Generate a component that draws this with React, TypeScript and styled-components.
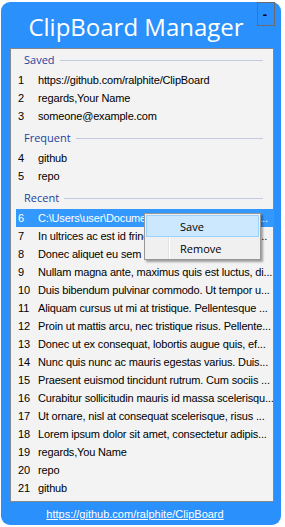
import React from "react";
import styled, { createGlobalStyle } from "styled-components";

const Global = createGlobalStyle`
  html, body { margin: 0; padding: 0; background: #ffffff; }
  * { box-sizing: border-box; }
`;

const Window = styled.div`
  position: relative;
  margin: 2px 0 0 1px;
  width: 280px;
  height: 523px;
  border-radius: 9px;
  background: #2a91fc;
  display: flex;
  flex-direction: column;
`;

const TitleBar = styled.div`
  height: 46px;
  display: grid;
  grid-template-columns: 1fr auto;
  align-items: start;
  padding-right: 6px;
`;

const Title = styled.div`
  padding: 9px 0 0 14px;
  text-align: center;
  font-family: "Open Sans", sans-serif;
  font-size: 24px;
  line-height: 32px;
  color: #ffffff;
  white-space: nowrap;
`;

const MinButton = styled.div`
  width: 18px;
  height: 24px;
  border: 1px solid #6b6b6b;
  display: flex;
  justify-content: center;
  padding: 5px 2px 0 0;
  font-family: "Liberation Sans", sans-serif;
  font-weight: bold;
  font-size: 13px;
  line-height: 13px;
  color: #000;
`;

const Panel = styled.div`
  margin: 0 7px 0 9px;
  height: 454px;
  border: 1px solid #828790;
  background: #f3f3f3;
  overflow: hidden;
`;

const Group = styled.div`
  & + & { margin-top: 2px; }
`;

const GroupHeader = styled.div`
  height: 22px;
  display: flex;
  align-items: center;
  gap: 5px;
  padding: 0 10px 0 13px;
`;

const GroupTitle = styled.span`
  font-family: "Open Sans", sans-serif;
  font-size: 11px;
  line-height: 14px;
  color: #1e3f9e;
`;

const GroupLine = styled.div`
  flex: 1;
  height: 1px;
  background: #c3cae0;
`;

const Row = styled.div<{ $selected?: boolean }>`
  height: 18px;
  margin-left: 5px;
  display: flex;
  align-items: center;
  background: ${(p) => (p.$selected ? "#3399ff" : "transparent")};
  color: ${(p) => (p.$selected ? "#ffffff" : "#000000")};
  font-family: "Liberation Sans", Arial, sans-serif;
  font-size: 11px;
  line-height: 13px;
`;

const Num = styled.span`
  width: 22px;
  padding-left: 2px;
  flex: none;
`;

const RowText = styled.span`
  flex: 1;
  min-width: 0;
  overflow: hidden;
  white-space: nowrap;
  letter-spacing: -0.16px;
`;

const Footer = styled.div`
  flex: 1;
  display: flex;
  justify-content: center;
  padding: 6px 12px 0 0;
`;

const FooterLink = styled.a`
  font-family: "Liberation Sans", Arial, sans-serif;
  font-size: 11px;
  line-height: 13px;
  color: #ffffff;
  text-decoration: underline;
`;

const Menu = styled.div`
  position: absolute;
  left: 143px;
  top: 211px;
  width: 117px;
  height: 47px;
  border: 1px solid #979797;
  padding: 1px;
  background: linear-gradient(
    to right,
    #f0f0f0 23px,
    #e2e3e3 23px,
    #e2e3e3 24px,
    #ffffff 24px,
    #ffffff 25px,
    #f0f0f0 25px
  );
  box-shadow: 2px 2px 2px rgba(0, 0, 0, 0.35);
`;

const MenuItem = styled.div<{ $active?: boolean }>`
  height: 22px;
  display: flex;
  align-items: center;
  padding-left: 33px;
  border: 1px solid ${(p) => (p.$active ? "#99d1ff" : "transparent")};
  background: ${(p) => (p.$active ? "#cce8ff" : "transparent")};
  font-family: "Open Sans", sans-serif;
  font-size: 11px;
  color: #000;
`;

type Item = { n: number; text: string };

const groups: { title: string; items: Item[] }[] = [
  {
    title: "Saved",
    items: [
      { n: 1, text: "https://github.com/ralphite/ClipBoard" },
      { n: 2, text: "regards,Your Name" },
      { n: 3, text: "someone@example.com" },
    ],
  },
  {
    title: "Frequent",
    items: [
      { n: 4, text: "github" },
      { n: 5, text: "repo" },
    ],
  },
  {
    title: "Recent",
    items: [
      { n: 6, text: "C:\\Users\\user\\Documents\\GitHub\\ClipBoard\\Cl..." },
      { n: 7, text: "In ultrices ac est id fringilla. Aliquam erat volutp..." },
      { n: 8, text: "Donec aliquet eu sem a vehicula." },
      { n: 9, text: "Nullam magna ante, maximus quis est luctus, di..." },
      { n: 10, text: "Duis bibendum pulvinar commodo. Ut tempor u..." },
      { n: 11, text: "Aliquam cursus ut mi at tristique. Pellentesque ..." },
      { n: 12, text: "Proin ut mattis arcu, nec tristique risus. Pellente..." },
      { n: 13, text: "Donec ut ex consequat, lobortis augue quis, ef..." },
      { n: 14, text: "Nunc quis nunc ac mauris egestas varius. Duis..." },
      { n: 15, text: "Praesent euismod tincidunt rutrum. Cum sociis ..." },
      { n: 16, text: "Curabitur sollicitudin mauris id massa scelerisqu..." },
      { n: 17, text: "Ut ornare, nisl at consequat scelerisque, risus ..." },
      { n: 18, text: "Lorem ipsum dolor sit amet, consectetur adipis..." },
      { n: 19, text: "regards,You Name" },
      { n: 20, text: "repo" },
      { n: 21, text: "github" },
    ],
  },
];

export default function App() {
  return (
    <>
      <Global />
      <Window>
        <TitleBar>
          <Title>ClipBoard Manager</Title>
          <MinButton>-</MinButton>
        </TitleBar>
        <Panel>
          {groups.map((g) => (
            <Group key={g.title}>
              <GroupHeader>
                <GroupTitle>{g.title}</GroupTitle>
                <GroupLine />
              </GroupHeader>
              {g.items.map((it) => (
                <Row key={it.n} $selected={it.n === 6}>
                  <Num>{it.n}</Num>
                  <RowText>{it.text}</RowText>
                </Row>
              ))}
            </Group>
          ))}
        </Panel>
        <Footer>
          <FooterLink href="#">https://github.com/ralphite/ClipBoard</FooterLink>
        </Footer>
        <Menu>
          <MenuItem $active>Save</MenuItem>
          <MenuItem>Remove</MenuItem>
        </Menu>
      </Window>
    </>
  );
}
